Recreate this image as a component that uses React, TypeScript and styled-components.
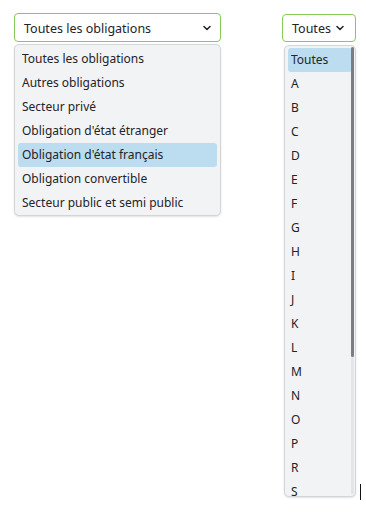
import React from "react";
import styled, { createGlobalStyle } from "styled-components";

const GlobalStyle = createGlobalStyle`
  html, body {
    margin: 0;
    padding: 0;
    background: #ffffff;
  }
  body {
    font-family: "Noto Sans", "Open Sans", sans-serif;
    font-size: 13px;
    color: #222428;
  }
`;

const Page = styled.div`
  position: relative;
  width: 366px;
  height: 513px;
  overflow: hidden;
  display: flex;
  align-items: flex-start;
  padding: 13px 10px 0 14px;
  box-sizing: border-box;
`;

interface BoxProps {
  $width: number;
  $offset?: number;
  $right?: boolean;
}

const SelectWrap = styled.div<BoxProps>`
  position: relative;
  width: ${p => p.$width}px;
  margin-top: ${p => p.$offset || 0}px;
  margin-left: ${p => (p.$right ? "auto" : "0")};
`;

const SelectBox = styled.div<{ $height: number; $padRight: number }>`
  box-sizing: border-box;
  height: ${p => p.$height}px;
  border: 1.5px solid #86c95a;
  border-radius: 4px;
  background: #ffffff;
  display: flex;
  align-items: center;
  justify-content: space-between;
  padding: 3px ${p => p.$padRight}px 0 9px;
  font-size: 12.5px;
  line-height: 1;
`;

const Chevron = () => (
  <svg width="8" height="6" viewBox="0 0 8 6" style={{ marginTop: -3 }}>
    <path d="M1 1.5 L4 4.5 L7 1.5" fill="none" stroke="#222" strokeWidth="1.5" strokeLinecap="round" strokeLinejoin="round" />
  </svg>
);

const Menu = styled.div<{ $top: number; $left: number; $height: number }>`
  position: absolute;
  top: ${p => p.$top}px;
  left: ${p => p.$left}px;
  right: 0;
  height: ${p => p.$height}px;
  box-sizing: border-box;
  background: #f2f3f5;
  border: 1px solid #d3d6d9;
  border-radius: 5px;
  box-shadow: 0 1px 2px rgba(0, 0, 0, 0.12);
  padding: 2px 3px;
  overflow: hidden;
`;

const Item = styled.div<{ $active?: boolean; $pad: number }>`
  height: 24px;
  line-height: 24px;
  font-size: 12px;
  padding-left: ${p => p.$pad}px;
  border-radius: 3px;
  white-space: nowrap;
  background: ${p => (p.$active ? "#bcdcef" : "transparent")};
`;

const ScrollTrack = styled.div`
  position: absolute;
  top: 1px;
  right: 1px;
  bottom: 2px;
  width: 3px;
  background: #e3e5e8;
  border-radius: 2px;
`;

const ScrollThumb = styled.div`
  height: 310px;
  background: #7a7d82;
  border-radius: 2px;
`;

const Caret = styled.div`
  position: absolute;
  left: 360px;
  top: 484px;
  width: 1px;
  height: 16px;
  background: #111;
`;

const bonds = [
  "Toutes les obligations",
  "Autres obligations",
  "Secteur privé",
  "Obligation d'état étranger",
  "Obligation d'état français",
  "Obligation convertible",
  "Secteur public et semi public",
];

const letters = ["Toutes", "A", "B", "C", "D", "E", "F", "G", "H", "I", "J", "K", "L", "M", "N", "O", "P", "R", "S"];

export default function App() {
  return (
    <>
      <GlobalStyle />
      <Page>
        <SelectWrap $width={207}>
          <SelectBox $height={29} $padRight={9}>
            <span>Toutes les obligations</span>
            <Chevron />
          </SelectBox>
          <Menu $top={31} $left={0} $height={172}>
            {bonds.map(b => (
              <Item key={b} $pad={4} $active={b === "Obligation d'état français"}>
                {b}
              </Item>
            ))}
          </Menu>
        </SelectWrap>
        <SelectWrap $width={74} $offset={1} $right>
          <SelectBox $height={28} $padRight={11}>
            <span>Toutes</span>
            <Chevron />
          </SelectBox>
          <Menu $top={31} $left={2} $height={452}>
            {letters.map(l => (
              <Item key={l} $pad={3} $active={l === "Toutes"}>
                {l}
              </Item>
            ))}
            <ScrollTrack>
              <ScrollThumb />
            </ScrollTrack>
          </Menu>
        </SelectWrap>
        <Caret />
      </Page>
    </>
  );
}
